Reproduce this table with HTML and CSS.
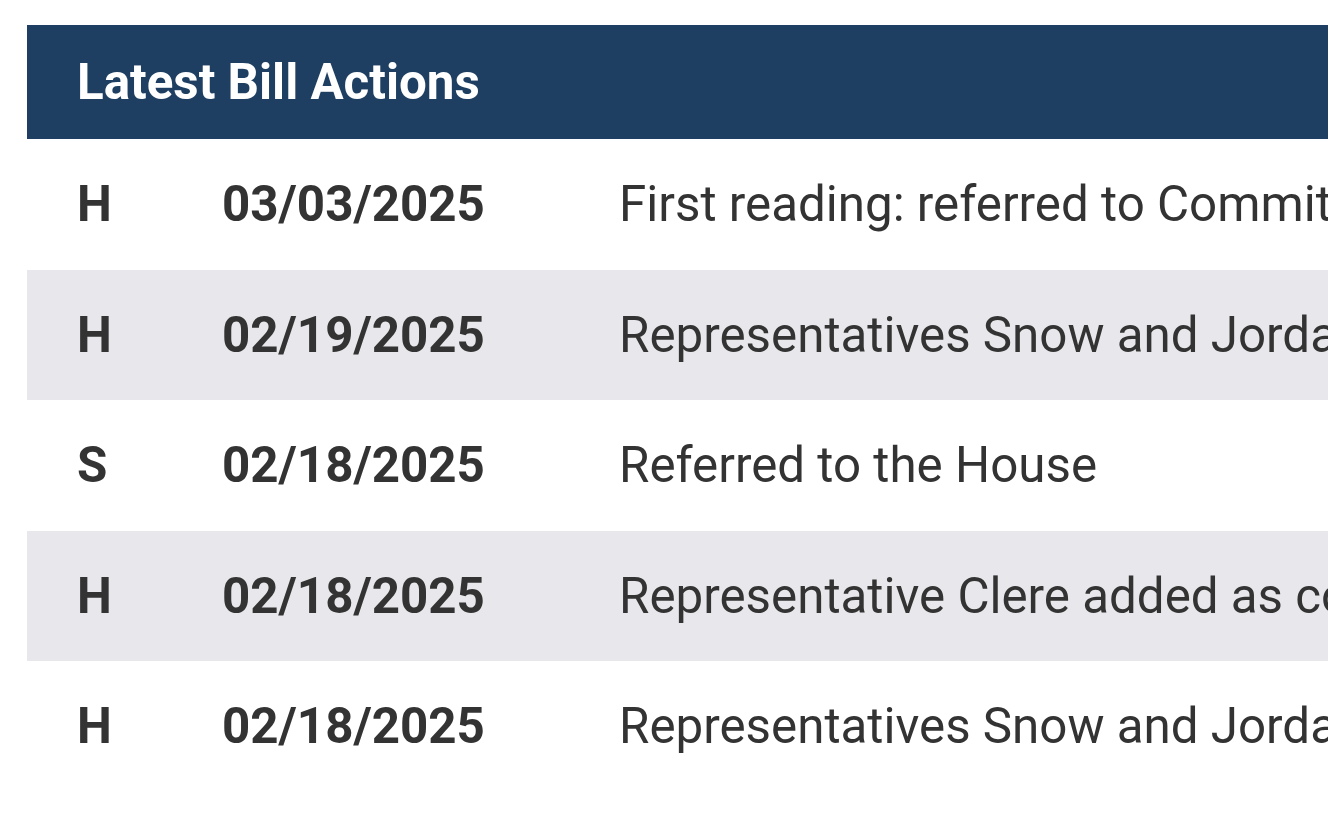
FILE: index.html
```html
<!DOCTYPE html>
<html lang="en">
<head>
<meta charset="utf-8">
<title>Latest Bill Actions</title>
<link rel="stylesheet" href="styles.css">
</head>
<body>
<section class="actions">
  <div class="actions-header">Latest Bill Actions</div>
  <div class="action-row">
    <span class="chamber">H</span>
    <span class="date">03/03/2025</span>
    <span class="desc">First reading: referred to Committee on Ways and Means</span>
  </div>
  <div class="action-row alt">
    <span class="chamber">H</span>
    <span class="date">02/19/2025</span>
    <span class="desc">Representatives Snow and Jordan added as cosponsors</span>
  </div>
  <div class="action-row">
    <span class="chamber">S</span>
    <span class="date">02/18/2025</span>
    <span class="desc">Referred to the House</span>
  </div>
  <div class="action-row alt">
    <span class="chamber">H</span>
    <span class="date">02/18/2025</span>
    <span class="desc">Representative Clere added as cosponsor</span>
  </div>
  <div class="action-row">
    <span class="chamber">H</span>
    <span class="date">02/18/2025</span>
    <span class="desc">Representatives Snow and Jordan added as cosponsors</span>
  </div>
</section>
</body>
</html>
```
FILE: styles.css
```css
html, body {
  margin: 0;
  padding: 0;
  background: #ffffff;
  overflow: hidden;
}
body {
  font-family: Roboto, "Liberation Sans", sans-serif;
  color: #333333;
  padding: 25px 0 0 27px;
}
.actions {
  width: 1700px;
}
.actions-header {
  background: #1e3f62;
  color: #ffffff;
  font-weight: 700;
  font-size: 49.3px;
  height: 114px;
  display: flex;
  align-items: center;
  padding: 0 50px;
}
.action-row {
  display: grid;
  grid-template-columns: 145px 397px 1fr;
  align-items: center;
  height: 130.5px;
  padding: 0 50px;
  font-size: 49.3px;
  white-space: nowrap;
}
.action-row.alt {
  background: #e8e8ec;
}
.chamber, .date {
  font-weight: 700;
}
.desc {
  font-weight: 400;
}
```
